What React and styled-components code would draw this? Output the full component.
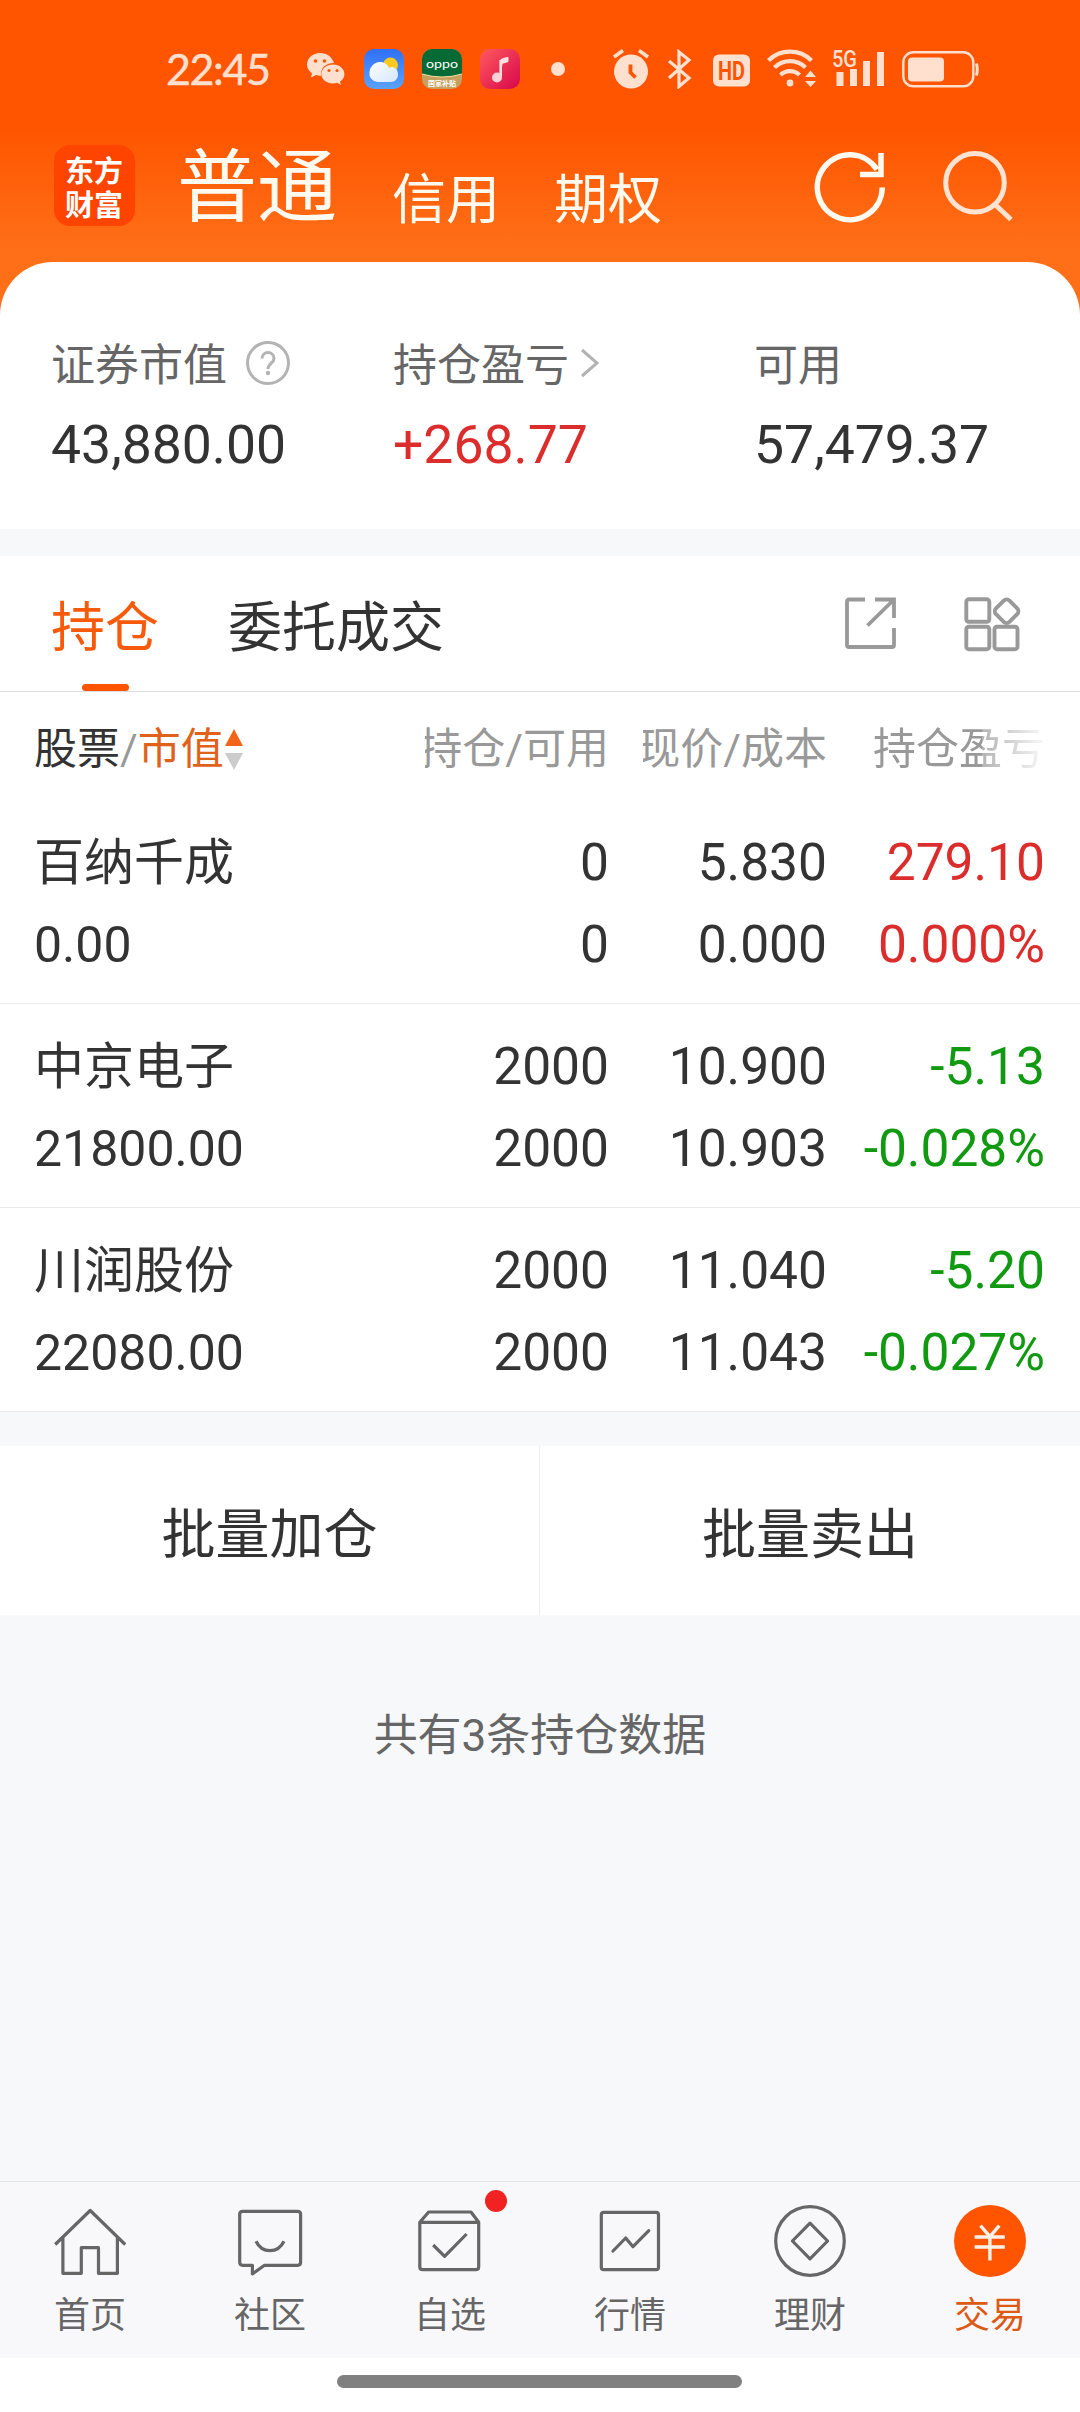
import styled, { createGlobalStyle } from "styled-components"

const GlobalStyle = createGlobalStyle`
  * {
    box-sizing: border-box;
  }
  body {
    margin: 0;
    background: #f7f8fa;
    color: #333;
    font-family: Roboto, "Noto Sans CJK SC", sans-serif;
  }
  svg {
    display: block;
    flex: none;
  }
`
const Page = styled.div`
  width: 1080px;
  height: 2412px;
  display: flex;
  flex-direction: column;
  overflow: hidden;
`
const Top = styled.header`
  height: 315px;
  flex: none;
  background: linear-gradient(180deg, #ff5500 0, #ff5500 128px, #ff6f18 250px, #ff6f18 315px);
`
const StatusBar = styled.div`
  height: 138px;
  padding: 0 100px 0 166px;
  display: flex;
  align-items: center;
  color: #ffdfce;
`
const Clock = styled.span`
  width: 141px;
  font-family: Lato, sans-serif;
  font-size: 43px;
  letter-spacing: -1.4px;
  line-height: 50px;
  -webkit-text-stroke: 0.5px #ffdfce;
`
const Apps = styled.div`
  display: flex;
  align-items: center;
  gap: 18px;
  margin-right: 48px;
`
const Dot = styled.span`
  width: 14px;
  height: 14px;
  margin-left: 13px;
  border-radius: 50%;
  background: #ffdfce;
`
const Signals = styled.div`
  display: grid;
  grid-template-columns: 55px 45px 54px 65px 70px 77px;
  align-items: center;
`
const TitleBar = styled.div`
  height: 124px;
  padding: 0 66px 0 54px;
  display: flex;
  align-items: flex-start;
`
const Logo = styled.div`
  width: 81px;
  height: 81px;
  margin-top: 7px;
  padding: 7px 0 0 11px;
  border-radius: 16px;
  background: #ff4400;
  color: #fff;
  font: 700 29px/34px "Noto Sans CJK SC", sans-serif;
`
const Accounts = styled.nav`
  display: flex;
  flex: 1;
  margin-left: 42px;
  color: #fffaf0;
`
const Account = styled.span`
  font-size: ${(p) => (p.$active ? 80 : 54)}px;
  line-height: 100px;
  margin-right: ${(p) => (p.$active ? 55 : 54)}px;
  padding-top: ${(p) => (p.$active ? 0 : 13)}px;
`
const TopActions = styled.div`
  display: flex;
  gap: 57px;
  padding-top: 12px;
`
const Summary = styled.section`
  height: 267px;
  flex: none;
  margin-top: -53px;
  padding: 74px 0 0 51px;
  display: grid;
  grid-template-columns: 342px 361px 1fr;
  background: #fff;
  border-radius: 53px 53px 0 0;
`
const Label = styled.div`
  display: flex;
  align-items: center;
  height: 60px;
  font-size: 44px;
  line-height: 60px;
  color: #666;
`
const Amount = styled.div`
  height: 98px;
  line-height: 98px;
  font-size: 53.5px;
  color: ${(p) => p.$color || "#333"};
`
const HelpIcon = styled.svg`
  margin: -6px 0 0 19px;
`
const Chevron = styled.svg`
  margin: -6px 0 0 11px;
`
const Tabs = styled.div`
  height: 136px;
  flex: none;
  margin-top: 27px;
  padding: 0 59px 0 51px;
  display: flex;
  background: #fff;
  border-bottom: 1px solid #ddd;
`
const Tab = styled.span`
  height: 135px;
  margin-right: 69px;
  display: flex;
  flex-direction: column;
  align-items: center;
  justify-content: space-between;
  font-size: 54px;
  line-height: 146px;
  color: ${(p) => (p.$active ? "#f85a0c" : "#333")};
  &::after {
    content: "";
    flex: none;
    width: 47px;
    height: 7px;
    margin-top: -18px;
    border-radius: 4px;
    background: ${(p) => (p.$active ? "#ff5500" : "transparent")};
  }
`
const TabActions = styled.div`
  display: flex;
  gap: 67px;
  margin-left: auto;
  padding-top: 41px;
`
const Holdings = styled.section`
  flex: none;
  background: #fff;
`
const Row = styled.div`
  display: grid;
  grid-template-columns: 357px repeat(3, 184px);
  column-gap: 34px;
  padding: 0 34px;
`
const HeadRow = styled(Row)`
  height: 108px;
  font-size: 43px;
  line-height: 115px;
  color: #999;
`
const HeadCell = styled.span`
  display: flex;
  justify-content: flex-end;
  overflow: hidden;
  white-space: nowrap;
  ${(p) => p.$faded && "mask-image: linear-gradient(90deg, #000 65.6%, rgba(0, 0, 0, 0.75) 65.6%, rgba(0, 0, 0, 0.05) 100%);"}
`
const SortCell = styled.span`
  display: flex;
  align-items: center;
  b {
    font-weight: 400;
    color: #333;
  }
  em {
    font-style: normal;
    color: #e0611a;
  }
`
const StockRow = styled(Row)`
  height: 204px;
  padding-top: 22px;
  border-bottom: 1px solid #eaeaea;
`
const Cell = styled.div`
  display: flex;
  flex-direction: column;
  align-items: ${(p) => (p.$left ? "flex-start" : "flex-end")};
  font-size: ${(p) => (p.$left ? 50 : 51.5)}px;
  line-height: 82px;
  white-space: nowrap;
  color: ${(p) => p.$color || "#333"};
`
const Batch = styled.div`
  height: 169px;
  flex: none;
  margin-top: 34px;
  display: grid;
  grid-template-columns: 1fr 1fr;
  background: #fff;
`
const BatchButton = styled.button`
  padding: 0;
  border: 0;
  border-right: ${(p) => (p.$divided ? "1px solid #eee" : "0")};
  background: none;
  font: inherit;
  font-size: 54px;
  color: #333;
`
const Total = styled.p`
  flex: 1;
  margin: 0;
  padding-top: 91px;
  text-align: center;
  font-size: 44px;
  line-height: 60px;
  color: #666;
`
const BottomNav = styled.nav`
  height: 177px;
  flex: none;
  display: grid;
  grid-template-columns: repeat(6, 1fr);
  background: #f8f8fb;
  border-top: 1px solid #e2e3e5;
`
const NavItem = styled.div`
  position: relative;
  display: flex;
  flex-direction: column;
  align-items: center;
  padding-top: 23px;
  font-size: 36px;
  line-height: 78px;
  color: ${(p) => (p.$active ? "#dc5a14" : "#666")};
`
const Badge = styled.i`
  position: absolute;
  top: 8px;
  left: 125px;
  width: 22px;
  height: 22px;
  border-radius: 50%;
  background: #f02222;
`
const HomeIndicator = styled.div`
  height: 54px;
  flex: none;
  padding: 17px 0 0 337px;
  background: #fff;
  &::after {
    content: "";
    display: block;
    width: 405px;
    height: 13px;
    border-radius: 7px;
    background: #808080;
  }
`

const AppIcons = () => (
  <Apps>
    <svg width="39" height="34" viewBox="0 0 39 34" fill="#ffdfce">
      <path d="M13 1C6 1 0 6 0 12.500c0 4 2 6.500 5 9l-1 4 5-2.500c2 .6 3 .7 5 .7C13 17 18 11 27 11 25 5 20 1 13 1z" />
      <path d="M26 12.500c-6.500 0-11.700 4.200-11.700 9.500S19.500 31.400 26 31.400c1.500 0 2.700-.2 4-.6l4 2.300-1-3.400c3-2 4.400-4.500 4.400-7.700 0-5.300-5-9.500-11.400-9.500z" />
      <g fill="#ff5500">
        <circle cx="8.500" cy="9" r="1.800" />
        <circle cx="17.500" cy="9" r="1.800" />
        <circle cx="22" cy="18.500" r="1.500" />
        <circle cx="30" cy="18.500" r="1.500" />
      </g>
    </svg>
    <svg width="40" height="40" viewBox="0 0 40 40">
      <defs>
        <linearGradient id="sky" x2="0" y2="1">
          <stop stopColor="#2f70f7" />
          <stop offset="1" stopColor="#5ba2fb" />
        </linearGradient>
        <linearGradient id="cloud" x2="1" y2="1">
          <stop stopColor="#fff" />
          <stop offset="1" stopColor="#d3e6ff" />
        </linearGradient>
      </defs>
      <rect width="40" height="40" rx="10" fill="url(#sky)" />
      <circle cx="26.500" cy="16" r="7.500" fill="#fcc91f" />
      <path d="M13.500 33a8.500 8.500 0 0 1-8-10c.6-5.500 5-10 10.500-10 4.500 0 7.500 2.500 9 6 4-2.500 9 .5 9 6.500 0 4.500-3 7.500-7.500 7.500z" fill="url(#cloud)" />
    </svg>
    <svg width="40" height="40" viewBox="0 0 40 40">
      <clipPath id="tile">
        <rect width="40" height="40" rx="10" />
      </clipPath>
      <g clipPath="url(#tile)">
        <rect width="40" height="40" fill="#c6a05f" />
        <path d="M0 0h40v25q-20 6-40 0z" fill="#056a35" />
        <path d="M0 25q20 6 40 0" fill="none" stroke="#f1df9f" strokeWidth="1" />
      </g>
      <text x="20" y="19" textAnchor="middle" textLength="32" lengthAdjust="spacingAndGlyphs" fontFamily="Lato" fontSize="12" fill="#fff">oppo</text>
      <text x="20" y="36.500" textAnchor="middle" fontFamily="Noto Sans CJK SC" fontSize="7" fontWeight="700" fill="#fff">国家补贴</text>
    </svg>
    <svg width="40" height="40" viewBox="0 0 40 40">
      <defs>
        <linearGradient id="music" x2="1" y2="1">
          <stop stopColor="#ff5a5d" />
          <stop offset="1" stopColor="#d8064c" />
        </linearGradient>
      </defs>
      <rect width="40" height="40" rx="10" fill="url(#music)" />
      <path d="M20.500 28V11.500q0-1.500 1.500-2l5-1.500q1.500-.3 1.500 1v3q0 1-1 1.300l-5 1.500" fill="#ffe3e3" />
      <path d="M20.700 28V11" stroke="#ffe3e3" strokeWidth="2.600" />
      <circle cx="17" cy="28.500" r="5" fill="#ffd0d5" />
    </svg>
    <Dot />
  </Apps>
)

const SignalIcons = () => (
  <Signals>
    <svg width="36" height="40" viewBox="0 0 36 40">
      <circle cx="18" cy="22.500" r="17" fill="#ffdfce" />
      <path d="M1 8l9-6.500M35 8l-9-6.500" stroke="#ffdfce" strokeWidth="3.500" />
      <path d="M17.500 15.500v8l5 5" fill="none" stroke="#ff5500" strokeWidth="3.800" />
    </svg>
    <svg width="24" height="40" viewBox="0 0 24 40" fill="none" stroke="#ffdfce" strokeWidth="3.200">
      <path d="M1 12l20 17-10 8.500V3L21 11 1 29" />
    </svg>
    <svg width="37" height="40" viewBox="0 0 37 40">
      <rect y="5.500" width="37" height="32" rx="6" fill="#ffdfce" />
      <text x="18.500" y="30.500" textAnchor="middle" textLength="27" lengthAdjust="spacingAndGlyphs" fontFamily="Roboto" fontSize="25" fontWeight="700" fill="#ff5500">HD</text>
    </svg>
    <svg width="50" height="40" viewBox="0 0 50 40" fill="none" stroke="#ffdfce" strokeWidth="4.200">
      <path d="M1.500 11.500a30.500 30.500 0 0 1 43 0M7.500 18.500a22 22 0 0 1 31 0M13.500 26a13.500 13.500 0 0 1 19 0" />
      <circle cx="23" cy="34" r="3.400" fill="#ffdfce" stroke="none" />
      <path d="M38 28l5.500-6.500 5.500 6.500zM38 32h11l-5.500 6z" fill="#ffdfce" stroke="none" />
    </svg>
    <svg width="53" height="40" viewBox="0 0 53 40" fill="#ffdfce">
      <text x="0" y="17.500" textLength="25" lengthAdjust="spacingAndGlyphs" fontFamily="Roboto" fontSize="23" fontWeight="500">5G</text>
      <path d="M4.500 23h7v14h-7zM18 20h7v17h-7zM31 12h7v25h-7zM45 3h7v34h-7z" />
    </svg>
    <svg width="77" height="40" viewBox="0 0 77 40" fill="none" stroke="#ffdfce" strokeWidth="2.400">
      <rect x="1.300" y="3.300" width="70" height="34" rx="10" />
      <rect x="6" y="8.500" width="36" height="24" rx="4" fill="#ffdfce" stroke="none" />
      <path d="M74.500 14.500q1.500 6 0 12" strokeWidth="3" />
    </svg>
  </Signals>
)

const line = { width: 72, height: 72, viewBox: "0 0 72 72", fill: "none", stroke: "#666", strokeWidth: 3.2, strokeLinejoin: "round" }

const navItems = [
  {
    name: "首页",
    icon: (
      <svg {...line}>
        <path d="M1.200 39.500L36.200 5.500l35 34M8.900 32v36.300h18.400V42.700h17.200v25.600h18.900V32" />
      </svg>
    ),
  },
  {
    name: "社区",
    icon: (
      <svg {...line}>
        <path d="M8.700 6.300h54.900q3 0 3 3v48q0 3-3 3H30.500L18.400 68.900v-8.600H8.700q-3 0-3-3v-48q0-3 3-3z" />
        <path d="M22 36.300c6 12.500 22 12.500 28 0" />
      </svg>
    ),
  },
  {
    name: "自选",
    badge: true,
    icon: (
      <svg {...line}>
        <path d="M5.800 17.300L14.700 7H57l7.700 10.300v44.400q0 3-3 3H8.800q-3 0-3-3zh58.900M19.200 40l11.400 11.300 22-22.300" />
      </svg>
    ),
  },
  {
    name: "行情",
    icon: (
      <svg {...line}>
        <rect x="7.300" y="7.300" width="57.200" height="57.400" rx="2.500" />
        <path d="M19 46l12.700-13 7.300 8.700 15.800-16" strokeLinecap="round" />
      </svg>
    ),
  },
  {
    name: "理财",
    icon: (
      <svg {...line}>
        <circle cx="36" cy="36" r="34.300" />
        <path d="M36 18.200L53.600 36 36 53.800 18.400 36z" />
      </svg>
    ),
  },
  {
    name: "交易",
    active: true,
    icon: (
      <svg {...line} stroke="#fff1e6" strokeWidth="3.400">
        <circle cx="36" cy="36" r="36" fill="#ff5500" stroke="none" />
        <path d="M26.500 20.700l9.400 11 9.400-11M20.600 32h30.200M20.600 42h30.200M35.900 31v24.500" />
      </svg>
    ),
  },
]

const RED = "#dc2d2d"
const GREEN = "#119a11"

const stocks = [
  { name: "百纳千成", value: "0.00", held: "0", usable: "0", price: "5.830", cost: "0.000", profit: "279.10", rate: "0.000%", color: RED },
  { name: "中京电子", value: "21800.00", held: "2000", usable: "2000", price: "10.900", cost: "10.903", profit: "-5.13", rate: "-0.028%", color: GREEN },
  { name: "川润股份", value: "22080.00", held: "2000", usable: "2000", price: "11.040", cost: "11.043", profit: "-5.20", rate: "-0.027%", color: GREEN },
]

export default function App() {
  return (
    <Page>
      <GlobalStyle />
      <Top>
        <StatusBar>
          <Clock>22:45</Clock>
          <AppIcons />
          <SignalIcons />
        </StatusBar>
        <TitleBar>
          <Logo>
            东方
            <br />
            财富
          </Logo>
          <Accounts>
            <Account $active>普通</Account>
            <Account>信用</Account>
            <Account>期权</Account>
          </Accounts>
          <TopActions>
            <svg width="72" height="74" viewBox="0 0 72 74" fill="none" stroke="#fffaf0" strokeWidth="5.500">
              <path d="M69.300 37.500A32.500 32.500 0 1 1 64 19.500" />
              <path d="M68 3v21.500H47" />
            </svg>
            <svg width="72" height="74" viewBox="0 0 72 74" fill="none" stroke="#ffe3d2" strokeWidth="5">
              <circle cx="33" cy="32.700" r="29.300" />
              <path d="M53 54.500L69 69.500" />
            </svg>
          </TopActions>
        </TitleBar>
      </Top>
      <Summary>
        <div>
          <Label>
            证券市值
            <HelpIcon width="44" height="44" viewBox="0 0 44 44" fill="none" stroke="#b3b3b3" strokeWidth="3">
              <circle cx="22" cy="22" r="20.500" />
              <path d="M16 17.500c0-8 12-8 12 0 0 5-6 5-6 10.500" />
              <circle cx="22" cy="32" r="2.200" fill="#b3b3b3" stroke="none" />
            </HelpIcon>
          </Label>
          <Amount>43,880.00</Amount>
        </div>
        <div>
          <Label>
            持仓盈亏
            <Chevron width="20" height="30" viewBox="0 0 20 30" fill="none" stroke="#b3b3b3" strokeWidth="3">
              <path d="M2 2l15 13L2 28" />
            </Chevron>
          </Label>
          <Amount $color={RED}>+268.77</Amount>
        </div>
        <div>
          <Label>可用</Label>
          <Amount>57,479.37</Amount>
        </div>
      </Summary>
      <Tabs>
        <Tab $active>持仓</Tab>
        <Tab>委托成交</Tab>
        <TabActions>
          <svg width="52" height="54" viewBox="0 0 52 54" fill="none" stroke="#999" strokeWidth="3.800">
            <path d="M20 2.500H4q-2 0-2 2V48q0 2 2 2h43q2 0 2-2V31M30 2.500h19V21M22.500 28.500L48.500 3" />
          </svg>
          <svg width="57" height="56" viewBox="0 0 57 56" fill="none" stroke="#999" strokeWidth="3.900">
            <rect x="2.300" y="2.300" width="23" height="22.500" rx="2.500" />
            <rect x="2.300" y="29.700" width="23" height="22.500" rx="2.500" />
            <rect x="30.500" y="29.700" width="23" height="22.500" rx="2.500" />
            <rect x="33.100" y="4.800" width="19" height="19" rx="4" transform="rotate(45 42.600 14.300)" />
          </svg>
        </TabActions>
      </Tabs>
      <Holdings>
        <HeadRow>
          <SortCell>
            <b>股票</b>/<em>市值</em>
            <svg width="20" height="41" viewBox="0 0 20 41">
              <path d="M1 17L10 0l9 17z" fill="#f2641a" />
              <path d="M1 24h18l-9 17z" fill="#ccc" />
            </svg>
          </SortCell>
          <HeadCell>持仓/可用</HeadCell>
          <HeadCell>现价/成本</HeadCell>
          <HeadCell $faded>持仓盈亏</HeadCell>
        </HeadRow>
        {stocks.map((s) => (
          <StockRow key={s.name}>
            <Cell $left>
              <span>{s.name}</span>
              <span>{s.value}</span>
            </Cell>
            <Cell>
              <span>{s.held}</span>
              <span>{s.usable}</span>
            </Cell>
            <Cell>
              <span>{s.price}</span>
              <span>{s.cost}</span>
            </Cell>
            <Cell $color={s.color}>
              <span>{s.profit}</span>
              <span>{s.rate}</span>
            </Cell>
          </StockRow>
        ))}
      </Holdings>
      <Batch>
        <BatchButton $divided>批量加仓</BatchButton>
        <BatchButton>批量卖出</BatchButton>
      </Batch>
      <Total>共有3条持仓数据</Total>
      <BottomNav>
        {navItems.map((item) => (
          <NavItem key={item.name} $active={item.active}>
            {item.icon}
            {item.name}
            {item.badge && <Badge />}
          </NavItem>
        ))}
      </BottomNav>
      <HomeIndicator />
    </Page>
  )
}
